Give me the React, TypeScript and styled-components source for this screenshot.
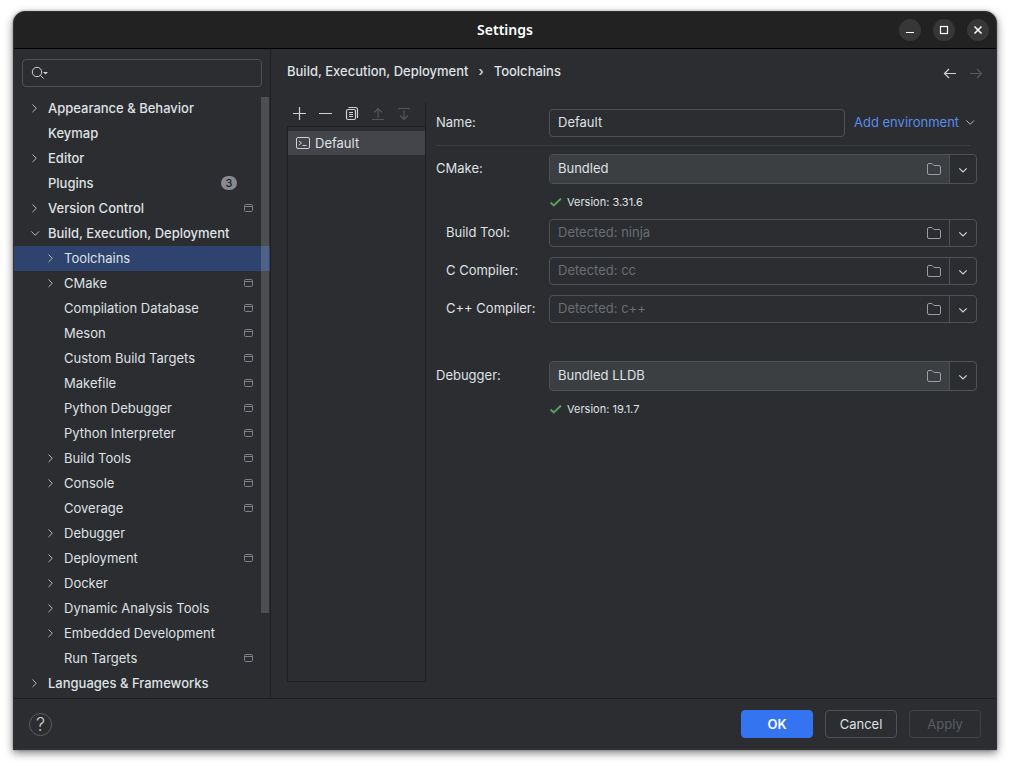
import React, { useState } from 'react';
import styled, { createGlobalStyle, css } from 'styled-components';

const Global = createGlobalStyle`
  * { box-sizing: border-box; }
  body { margin: 0; background: #ffffff; }
  button, input { font: inherit; color: inherit; }
`;

const Page = styled.div`
  display: flex;
  min-height: 100vh;
  padding: 11px 13px 16px;
  font-family: Inter, "Liberation Sans", sans-serif;
  font-size: 13px;
  line-height: 16px;
  color: #dfe1e5;
`;

const Window = styled.div`
  flex: 1;
  min-width: 0;
  display: flex;
  flex-direction: column;
  background: #2b2d30;
  border: 1px solid #333437;
  border-radius: 12px 12px 0 0;
  box-shadow: 0 3px 8px rgba(0, 0, 0, 0.5), 0 0 2px rgba(0, 0, 0, 0.4);
  overflow: hidden;
`;

const TitleBar = styled.header`
  display: grid;
  grid-template-columns: 1fr auto 1fr;
  align-items: center;
  height: 37px;
  padding: 0 7px;
  background: #222222;
  border-bottom: 1px solid #000000;
`;

const Title = styled.h1`
  grid-column: 2;
  margin: 0;
  font: 600 14px/20px "Noto Sans", sans-serif;
  color: #ffffff;
`;

const WindowButtons = styled.div`
  display: flex;
  justify-content: flex-end;
  gap: 12px;
`;

const WindowButton = styled.button`
  display: flex;
  align-items: center;
  justify-content: center;
  width: 22px;
  height: 22px;
  padding: 0;
  border: 0;
  border-radius: 50%;
  background: #373737;
  color: #ffffff;
`;

const Body = styled.div`
  flex: 1;
  display: flex;
`;

const Sidebar = styled.aside`
  flex: none;
  width: 257px;
  display: flex;
  flex-direction: column;
  padding-bottom: 2px;
  border-right: 1px solid #1e1f22;
`;

const SearchBox = styled.label`
  display: flex;
  align-items: center;
  height: 28px;
  margin: 10px 8px 9px;
  padding: 0 8px;
  border: 1px solid #4e5157;
  border-radius: 4px;
`;

const SearchInput = styled.input`
  flex: 1;
  min-width: 0;
  border: 0;
  outline: 0;
  background: transparent;
`;

const TreeArea = styled.nav`
  position: relative;
`;

const ScrollThumb = styled.div`
  position: absolute;
  top: 1px;
  right: 1px;
  width: 8px;
  height: 86%;
  background: rgba(255, 255, 255, 0.16);
`;

const Tree = styled.ul`
  margin: 0;
  padding: 0;
  list-style: none;
`;

const TreeRow = styled.button<{ $level: number; $selected: boolean }>`
  display: flex;
  align-items: center;
  width: 100%;
  height: 25px;
  padding: 0 14px 1px ${(p) => 12 + p.$level * 16}px;
  border: 0;
  text-align: left;
  background: ${(p) => (p.$selected ? '#2e436e' : 'transparent')};
  font-weight: ${(p) => (p.$level ? 400 : 500)};
`;

const TreeArrow = styled.span`
  display: flex;
  width: 22px;
`;

const TreeLabel = styled.span`
  flex: 1;
  white-space: nowrap;
`;

const Count = styled.span`
  margin-right: 19px;
  min-width: 16px;
  padding: 0 4px;
  border-radius: 7px;
  background: #868a91;
  color: #1e1f22;
  font-size: 11px;
  font-weight: 500;
  line-height: 14px;
  text-align: center;
`;

const Main = styled.main`
  flex: 1;
  min-width: 0;
  display: flex;
  flex-direction: column;
`;

const PageHeader = styled.div`
  display: flex;
  align-items: center;
  justify-content: space-between;
  height: 53px;
  padding: 0 12px 10px 16px;
`;

const Crumbs = styled.nav`
  display: flex;
  gap: 10px;
  font-weight: 500;
`;

const Crumb = styled.a`
  color: inherit;
  text-decoration: none;
`;

const History = styled.div`
  display: flex;
  gap: 10px;
  padding-top: 5px;
`;

const IconButton = styled.button`
  display: flex;
  align-items: center;
  justify-content: center;
  width: 16px;
  height: 16px;
  padding: 0;
  border: 0;
  background: transparent;
  color: #ced0d6;
  &:disabled { color: #54565b; }
`;

const Content = styled.div`
  flex: 1;
  display: flex;
  padding: 0 19px 16px 16px;
`;

const ListPanel = styled.section`
  flex: none;
  width: 139px;
  display: flex;
  flex-direction: column;
  border-right: 1px solid #1e1f22;
`;

const Toolbar = styled.div`
  display: flex;
  align-items: center;
  gap: 10px;
  height: 24px;
  padding: 0 4px;
`;

const EnvList = styled.ul`
  flex: 1;
  margin: 0;
  padding: 4px 0 0;
  list-style: none;
  border: 1px solid #1e1f22;
  border-right: 0;
`;

const EnvItem = styled.button`
  display: flex;
  align-items: center;
  gap: 4px;
  width: 100%;
  height: 24px;
  padding: 0 7px;
  border: 0;
  background: #43454a;
  text-align: left;
`;

const Form = styled.form`
  flex: 1;
  min-width: 0;
  padding: 7px 0 0 10px;
`;

const Field = styled.div<{ $indent?: boolean; $gap?: number }>`
  display: grid;
  grid-template-columns: 113px minmax(0, 1fr);
  align-items: center;
  margin-bottom: ${(p) => p.$gap ?? 10}px;
  & > label { padding: 0 0 2px ${(p) => (p.$indent ? 10 : 0)}px; }
`;

const NameLine = styled.div`
  display: flex;
  align-items: center;
  gap: 9px;
`;

const box = css`
  border: 1px solid #4e5157;
  border-radius: 4px;
`;

const TextInput = styled.input`
  ${box}
  flex: 1;
  min-width: 0;
  height: 28px;
  padding: 0 8px 2px;
  background: transparent;
  outline: 0;
`;

const LinkButton = styled.button`
  display: flex;
  align-items: center;
  justify-content: space-between;
  min-width: 123px;
  padding: 0 0 2px;
  border: 0;
  background: transparent;
  color: #5a8cec;
  white-space: nowrap;
`;

const Divider = styled.hr`
  height: 1px;
  margin: 0 7px 8px 0;
  border: 0;
  background: #3c3e42;
`;

const Combo = styled.div<{ $filled: boolean }>`
  ${box}
  display: flex;
  height: ${(p) => (p.$filled ? 30 : 28)}px;
  overflow: hidden;
`;

const ComboText = styled.div<{ $filled: boolean }>`
  flex: 1;
  min-width: 0;
  display: flex;
  align-items: center;
  padding: 0 7px 0 8px;
  background: ${(p) => (p.$filled ? '#3c3f41' : 'transparent')};
`;

const ComboInput = styled.input`
  flex: 1;
  min-width: 0;
  padding: 0 0 2px;
  border: 0;
  outline: 0;
  background: transparent;
  &::placeholder { color: #6a6d73; opacity: 1; }
`;

const ComboArrow = styled.button`
  display: flex;
  align-items: center;
  justify-content: center;
  width: 27px;
  padding: 0;
  border: 0;
  border-left: 1px solid #4e5157;
  background: transparent;
  color: #ced0d6;
`;

const Version = styled.p<{ $gap: number }>`
  display: flex;
  align-items: center;
  gap: 4px;
  margin: 0 0 ${(p) => p.$gap}px 113px;
  font-size: 11px;
`;

const Footer = styled.footer`
  display: flex;
  align-items: center;
  gap: 12px;
  height: 51px;
  padding: 0 15px;
  border-top: 1px solid #1e1f22;
`;

const Help = styled.button`
  width: 23px;
  height: 23px;
  margin-right: auto;
  padding: 0;
  border: 1px solid #5a5d63;
  border-radius: 50%;
  background: transparent;
  color: #ced0d6;
  font-size: 18px;
  font-weight: 300;
  line-height: 21px;
`;

const Action = styled.button<{ $primary?: boolean }>`
  width: 72px;
  height: 28px;
  padding: 0;
  border: 1px solid ${(p) => (p.$primary ? '#3574f0' : '#4e5157')};
  border-radius: 4px;
  background: ${(p) => (p.$primary ? '#3574f0' : 'transparent')};
  color: ${(p) => (p.$primary ? '#ffffff' : '#dfe1e5')};
  font-weight: ${(p) => (p.$primary ? 600 : 400)};
  &:disabled { border-color: #3f4145; color: #5a5d63; }
`;

const glyphs = {
  right: <path d="M6.500 4.500 10.300 8.250 6.500 12" />,
  down: <path d="M5.300 6.400 9.200 10.300 13 6.400" />,
  comboDown: <path d="M4.300 7.300 8 11 11.700 7.300" strokeWidth="1.200" />,
  back: <path d="M14 8.500H2.500M7 4 2.500 8.500l4.500 4.500" strokeWidth="1.200" />,
  forward: <path d="M2 8.500h11.500M9 4l4.500 4.500L9 13" strokeWidth="1.200" />,
  plus: <path d="M8.500 1v13M2 7.500h13" strokeWidth="1.200" />,
  minus: <path d="M2 7.500h13" strokeWidth="1.200" />,
  copy: (
    <>
      <rect x="3.500" y="3.500" width="9" height="10" rx="1.500" strokeWidth="1.200" />
      <path d="M5.500 1.500h7a2 2 0 0 1 2 2V12" strokeWidth="1.200" />
      <path d="M6 6.500h4M6 8.500h4M6 10.500h4" />
    </>
  ),
  up: <path d="M3 13.500h12M9 12V2.500M5 6.500l4-4 4 4" strokeWidth="1.200" />,
  bottom: <path d="M3 2.500h12M9 4.500v9M5 9.500l4 4 4-4" strokeWidth="1.200" />,
  terminal: (
    <>
      <rect x="1.500" y="2.500" width="13" height="11" rx="1.500" />
      <path d="M4 6l2.500 2L4 10M7.500 10.500h4" />
    </>
  ),
  folder: (
    <path d="M1.500 12V4a1.500 1.500 0 0 1 1.500-1.500h3l2 2h5A1.500 1.500 0 0 1 14.500 6v6a1.500 1.500 0 0 1-1.500 1.500H3A1.500 1.500 0 0 1 1.500 12Z" />
  ),
  project: (
    <>
      <rect x="4.500" y="4.500" width="8" height="7" rx="1.200" />
      <path d="M4.500 6.500h8" />
    </>
  ),
  check: <path d="M1.800 8.500 5.600 12 13.700 4" strokeWidth="2.200" />,
  search: (
    <>
      <circle cx="6" cy="7" r="4.700" />
      <path d="m9.500 10.500 3 3" />
      <path d="M12 7h5l-2.500 2.500Z" fill="currentColor" stroke="none" />
    </>
  ),
  minimize: <path d="M4 10.500h8" />,
  maximize: <rect x="4.500" y="4.500" width="7" height="7" strokeWidth="1.200" />,
  close: <path d="m4.500 4.500 7 7M11.500 4.500l-7 7" strokeWidth="1.500" />,
};

type GlyphName = keyof typeof glyphs;

function Icon({ name, color, size = 16, wide = 0 }: { name: GlyphName; color?: string; size?: number; wide?: number }) {
  return (
    <svg
      width={size + wide}
      height={size}
      viewBox={`0 0 ${16 + wide} 16`}
      fill="none"
      stroke="currentColor"
      color={color}
      aria-hidden="true"
    >
      {glyphs[name]}
    </svg>
  );
}

type Node = { label: string; level?: number; arrow?: 'right' | 'down'; project?: boolean; count?: number };

const nodes: Node[] = [
  { label: 'Appearance & Behavior', arrow: 'right' },
  { label: 'Keymap' },
  { label: 'Editor', arrow: 'right' },
  { label: 'Plugins', count: 3 },
  { label: 'Version Control', arrow: 'right', project: true },
  { label: 'Build, Execution, Deployment', arrow: 'down' },
  { label: 'Toolchains', level: 1, arrow: 'right' },
  { label: 'CMake', level: 1, arrow: 'right', project: true },
  { label: 'Compilation Database', level: 1, project: true },
  { label: 'Meson', level: 1, project: true },
  { label: 'Custom Build Targets', level: 1, project: true },
  { label: 'Makefile', level: 1, project: true },
  { label: 'Python Debugger', level: 1, project: true },
  { label: 'Python Interpreter', level: 1, project: true },
  { label: 'Build Tools', level: 1, arrow: 'right', project: true },
  { label: 'Console', level: 1, arrow: 'right', project: true },
  { label: 'Coverage', level: 1, project: true },
  { label: 'Debugger', level: 1, arrow: 'right' },
  { label: 'Deployment', level: 1, arrow: 'right', project: true },
  { label: 'Docker', level: 1, arrow: 'right' },
  { label: 'Dynamic Analysis Tools', level: 1, arrow: 'right' },
  { label: 'Embedded Development', level: 1, arrow: 'right' },
  { label: 'Run Targets', level: 1, project: true },
  { label: 'Languages & Frameworks', arrow: 'right' },
];

type ToolFieldProps = { id: string; label: string; value?: string; placeholder?: string; indent?: boolean; gap?: number };

function ToolField({ id, label, value, placeholder, indent, gap }: ToolFieldProps) {
  const filled = Boolean(value);
  return (
    <Field $indent={indent} $gap={gap}>
      <label htmlFor={id}>{label}</label>
      <Combo $filled={filled}>
        <ComboText $filled={filled}>
          <ComboInput id={id} defaultValue={value} placeholder={placeholder} />
          <IconButton type="button" aria-label={`Browse ${label}`}>
            <Icon name="folder" color="#9a9da3" />
          </IconButton>
        </ComboText>
        <ComboArrow type="button" aria-label={`Choose ${label}`}>
          <Icon name="comboDown" />
        </ComboArrow>
      </Combo>
    </Field>
  );
}

export default function App() {
  const [selected, setSelected] = useState('Toolchains');

  return (
    <>
      <Global />
      <Page>
        <Window>
          <TitleBar>
            <Title>Settings</Title>
            <WindowButtons>
              <WindowButton aria-label="Minimize"><Icon name="minimize" /></WindowButton>
              <WindowButton aria-label="Maximize"><Icon name="maximize" /></WindowButton>
              <WindowButton aria-label="Close"><Icon name="close" /></WindowButton>
            </WindowButtons>
          </TitleBar>

          <Body>
            <Sidebar>
              <SearchBox>
                <Icon name="search" wide={2} color="#ced0d6" />
                <SearchInput aria-label="Search settings" />
              </SearchBox>
              <TreeArea>
                <Tree>
                  {nodes.map((n) => (
                    <li key={n.label}>
                      <TreeRow
                        $level={n.level ?? 0}
                        $selected={selected === n.label}
                        onClick={() => setSelected(n.label)}
                      >
                        <TreeArrow>{n.arrow && <Icon name={n.arrow} color="#b4b8bf" />}</TreeArrow>
                        <TreeLabel>{n.label}</TreeLabel>
                        {n.count && <Count>{n.count}</Count>}
                        {n.project && <Icon name="project" color="#7d8087" />}
                      </TreeRow>
                    </li>
                  ))}
                </Tree>
                <ScrollThumb />
              </TreeArea>
            </Sidebar>

            <Main>
              <PageHeader>
                <Crumbs aria-label="Breadcrumb">
                  <Crumb href="#build">Build, Execution, Deployment</Crumb>
                  <span>›</span>
                  <Crumb href="#toolchains">Toolchains</Crumb>
                </Crumbs>
                <History>
                  <IconButton aria-label="Back"><Icon name="back" /></IconButton>
                  <IconButton aria-label="Forward" disabled><Icon name="forward" /></IconButton>
                </History>
              </PageHeader>

              <Content>
                <ListPanel>
                  <Toolbar>
                    <IconButton aria-label="Add"><Icon name="plus" /></IconButton>
                    <IconButton aria-label="Remove"><Icon name="minus" /></IconButton>
                    <IconButton aria-label="Copy"><Icon name="copy" /></IconButton>
                    <IconButton aria-label="Move up" disabled><Icon name="up" /></IconButton>
                    <IconButton aria-label="Move down" disabled><Icon name="bottom" /></IconButton>
                  </Toolbar>
                  <EnvList>
                    <li>
                      <EnvItem>
                        <Icon name="terminal" color="#ced0d6" />
                        Default
                      </EnvItem>
                    </li>
                  </EnvList>
                </ListPanel>

                <Form onSubmit={(e) => e.preventDefault()}>
                  <Field $gap={8}>
                    <label htmlFor="name">Name:</label>
                    <NameLine>
                      <TextInput id="name" defaultValue="Default" />
                      <LinkButton type="button">
                        Add environment
                        <Icon name="down" color="#b4b8bf" />
                      </LinkButton>
                    </NameLine>
                  </Field>
                  <Divider />
                  <ToolField id="cmake" label="CMake:" value="Bundled" />
                  <Version $gap={9}>
                    <Icon name="check" color="#57a05d" size={14} />
                    Version: 3.31.6
                  </Version>
                  <ToolField id="build" label="Build Tool:" placeholder="Detected: ninja" indent />
                  <ToolField id="cc" label="C Compiler:" placeholder="Detected: cc" indent />
                  <ToolField id="cxx" label="C++ Compiler:" placeholder="Detected: c++" indent gap={38} />
                  <ToolField id="debugger" label="Debugger:" value="Bundled LLDB" />
                  <Version $gap={0}>
                    <Icon name="check" color="#57a05d" size={14} />
                    Version: 19.1.7
                  </Version>
                </Form>
              </Content>
            </Main>
          </Body>

          <Footer>
            <Help aria-label="Help">?</Help>
            <Action $primary>OK</Action>
            <Action>Cancel</Action>
            <Action disabled>Apply</Action>
          </Footer>
        </Window>
      </Page>
    </>
  );
}
